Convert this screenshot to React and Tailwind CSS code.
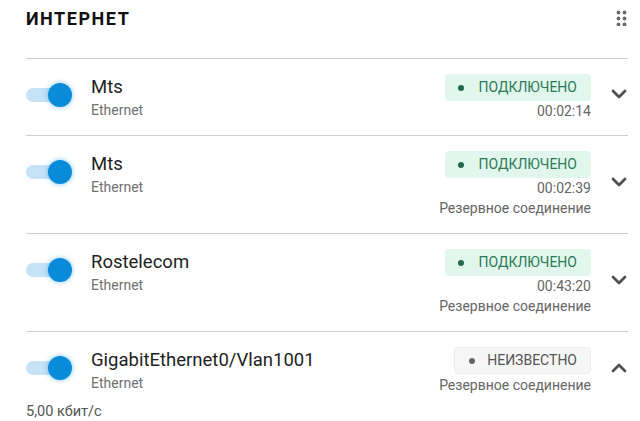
import React from "react";

const rows = [
  { name: "Mts", status: "ok", time: "00:02:14", backup: false, open: false },
  { name: "Mts", status: "ok", time: "00:02:39", backup: true, open: false },
  { name: "Rostelecom", status: "ok", time: "00:43:20", backup: true, open: false },
  { name: "GigabitEthernet0/Vlan1001", status: "unknown", time: null, backup: true, open: true },
];

function Toggle() {
  return (
    <div className="relative w-[46px] h-[24px] flex items-center shrink-0">
      <div className="w-[40px] h-[14px] rounded-full bg-[#c6e2f6]" />
      <div className="absolute right-0 top-0 w-[24px] h-[24px] rounded-full bg-[#0a8bd9] shadow-[0_0_4px_1px_rgba(10,139,217,0.35)]" />
    </div>
  );
}

function Chevron({ up }) {
  return (
    <svg width="18" height="12" viewBox="0 0 18 12" className={up ? "rotate-180" : ""}>
      <path d="M3 3 L9 9 L15 3" fill="none" stroke="#505050" strokeWidth="2.8" strokeLinecap="round" strokeLinejoin="round" />
    </svg>
  );
}

function Badge({ status }) {
  if (status === "ok") {
    return (
      <div className="h-[27px] flex items-center pl-[13px] pr-[14px] gap-[14px] rounded-[4px] bg-[#e1f6ec] text-[#2e7a57] text-[14px]">
        <span className="w-[6px] h-[6px] rounded-full bg-[#22684a]" />
        ПОДКЛЮЧЕНО
      </div>
    );
  }
  return (
    <div className="h-[27px] flex items-center pl-[14px] pr-[13px] gap-[12px] rounded-[4px] bg-[#f6f6f6] border border-[#ececec] text-[#555] text-[14px]">
      <span className="w-[6px] h-[6px] rounded-full bg-[#666]" />
      НЕИЗВЕСТНО
    </div>
  );
}

function Row({ row, last }) {
  return (
    <div className={"flex items-start border-t border-[#cfcfcf] pt-[15px] " + (last ? "pb-0" : "pb-[14px]")}>
      <div className="mt-[9px]">
        <Toggle />
      </div>
      <div className="ml-[19px] flex-1 flex flex-col mt-[1px]">
        <span className="text-[18.5px] leading-[24px] text-[#1e1e1e]">{row.name}</span>
        <span className="text-[14px] leading-[20px] text-[#707070] mt-[1px]">Ethernet</span>
      </div>
      <div className="flex flex-col items-end">
        <Badge status={row.status} />
        {row.time && <span className="text-[14px] leading-[20px] text-[#666]">{row.time}</span>}
        {row.backup && (
          <span className={"text-[14px] leading-[21px] text-[#666] " + (row.time ? "" : "mt-[1px]")}>
            Резервное соединение
          </span>
        )}
      </div>
      <div className="w-[37px] self-center flex justify-end mb-[7px]">
        <Chevron up={row.open} />
      </div>
    </div>
  );
}

export default function App() {
  return (
    <div className="w-[640px] h-[421px] bg-white overflow-hidden font-['Roboto',sans-serif]">
      <div className="pl-[26px] pr-[12px]">
        <div className="flex items-center justify-between h-[35px] pt-[1px]">
          <h2 className="text-[18px] font-bold tracking-[0.085em] text-[#111]">ИНТЕРНЕТ</h2>
          <svg width="12" height="16" viewBox="0 0 12 16">
            {[0, 1, 2].map((r) =>
              [0, 1].map((c) => <circle key={r + "-" + c} cx={2.5 + c * 6} cy={2.5 + r * 6} r="1.9" fill="#6a6a6a" />)
            )}
          </svg>
        </div>
        <div className="mt-[23px]">
          {rows.map((row, i) => (
            <Row key={i} row={row} last={i === rows.length - 1} />
          ))}
        </div>
        <div className="mt-[6px] text-[14.5px] leading-[20px] text-[#555]">5,00 кбит/с</div>
      </div>
    </div>
  );
}
